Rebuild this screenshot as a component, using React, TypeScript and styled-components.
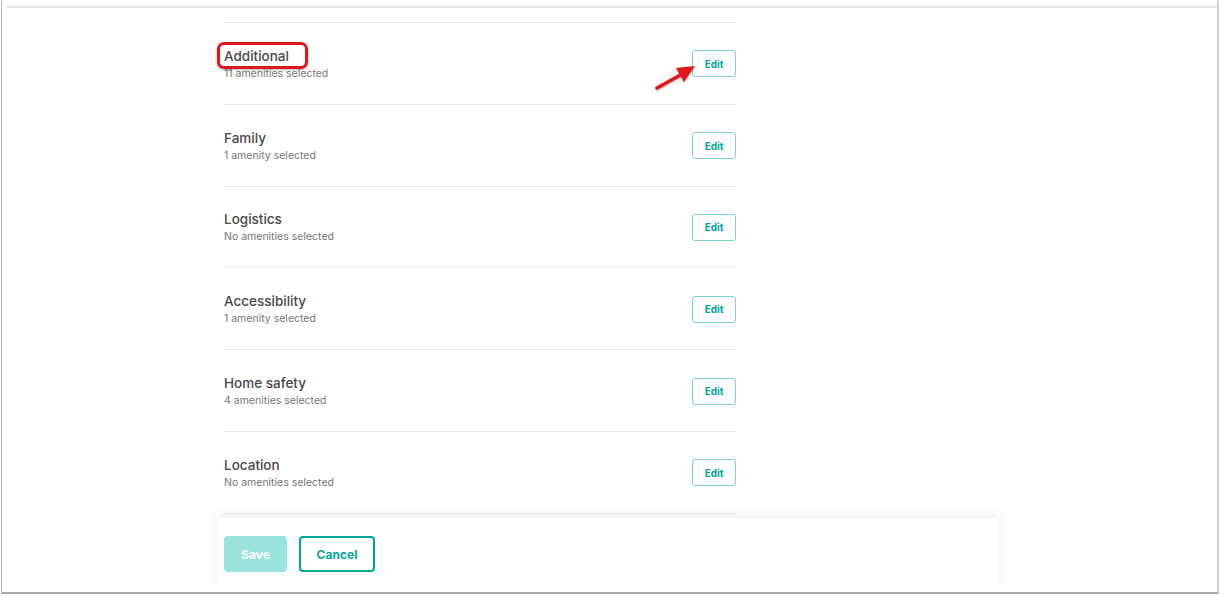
import styled, { createGlobalStyle } from "styled-components";

const GlobalStyle = createGlobalStyle`
  html, body {
    margin: 0;
    padding: 0;
    background: #ffffff;
    font-family: "Inter", "Noto Sans", sans-serif;
    overflow: hidden;
  }
`;

type Amenity = {
  title: string;
  summary: string;
};

const amenities: Amenity[] = [
  { title: "Additional", summary: "11 amenities selected" },
  { title: "Family", summary: "1 amenity selected" },
  { title: "Logistics", summary: "No amenities selected" },
  { title: "Accessibility", summary: "1 amenity selected" },
  { title: "Home safety", summary: "4 amenities selected" },
  { title: "Location", summary: "No amenities selected" },
];

const App = () => {
  return (
    <Frame>
      <GlobalStyle />
      <Window>
        <TopRule />
        <Body>
          <List>
            {amenities.map((item) => (
              <Row key={item.title}>
                <RowText>
                  <Title>{item.title}</Title>
                  <Summary>{item.summary}</Summary>
                </RowText>
                <EditButton>Edit</EditButton>
              </Row>
            ))}
          </List>
          <Footer>
            <SaveButton disabled>Save</SaveButton>
            <CancelButton>Cancel</CancelButton>
          </Footer>
        </Body>
      </Window>

      {/* annotation overlays */}
      <Highlight />
      <Arrow width="60" height="40" viewBox="0 0 60 40">
        <line x1="5" y1="30" x2="32" y2="15" stroke="#e3151b" strokeWidth="3.5" strokeLinecap="round" />
        <polygon points="43,8 24,10 32,24" fill="#e3151b" />
      </Arrow>
    </Frame>
  );
};

export default App;

const Frame = styled.div`
  position: relative;
  width: 1226px;
  height: 596px;
  background: #ffffff;
`;

const Window = styled.div`
  box-sizing: border-box;
  margin-left: 1px;
  width: 1218px;
  height: 594px;
  display: flex;
  flex-direction: column;
  border-left: 1px solid #bdbdbd;
  border-right: 2px solid #cfcfcf;
  border-bottom: 2px solid #a8a8a8;
`;

const TopRule = styled.div`
  margin: 6px 0 0 5px;
  height: 2px;
  background: #e4e4e4;
  flex-shrink: 0;
`;

const Body = styled.div`
  flex: 1;
  display: flex;
  flex-direction: column;
  padding-left: 216px;
`;

const List = styled.div`
  width: 512px;
  margin: 14px 0 0 6px;
  border-bottom: 1px solid #ebebeb;
`;

const Row = styled.div`
  box-sizing: border-box;
  height: 81.8px;
  padding-top: 1px;
  display: flex;
  align-items: center;
  justify-content: space-between;
  border-top: 1px solid #ebebeb;
`;

const RowText = styled.div`
  display: flex;
  flex-direction: column;
`;

const Title = styled.div`
  font-size: 13.5px;
  line-height: 18px;
  font-weight: 500;
  color: #484848;
`;

const Summary = styled.div`
  margin-top: 2px;
  font-size: 10.5px;
  line-height: 14px;
  color: #767676;
`;

const EditButton = styled.button`
  box-sizing: border-box;
  width: 44px;
  height: 27px;
  padding: 0;
  background: #ffffff;
  border: 1px solid #7dd3ca;
  border-radius: 3px;
  font-family: inherit;
  font-size: 10px;
  font-weight: 700;
  color: #00a699;
  cursor: pointer;
`;

const Footer = styled.div`
  box-sizing: border-box;
  margin-top: auto;
  margin-bottom: 2px;
  width: 780px;
  height: 72px;
  padding: 18px 0 0 6px;
  display: flex;
  align-items: flex-start;
  gap: 12px;
  background: #ffffff;
  box-shadow: 0 -5px 8px rgba(0, 0, 0, 0.05);
`;

const BaseButton = styled.button`
  box-sizing: border-box;
  height: 36px;
  border-radius: 4px;
  font-family: inherit;
  font-size: 12px;
  font-weight: 700;
  cursor: pointer;
`;

const SaveButton = styled(BaseButton)`
  width: 63px;
  border: none;
  background: #99e4dc;
  color: #ffffff;
`;

const CancelButton = styled(BaseButton)`
  width: 76px;
  border: 2px solid #00a699;
  background: #ffffff;
  color: #00a699;
`;

const Highlight = styled.div`
  position: absolute;
  left: 217px;
  top: 42px;
  width: 91px;
  height: 27px;
  box-sizing: border-box;
  border: 3px solid #e3151b;
  border-radius: 7px;
  box-shadow: 0 1px 3px rgba(0, 0, 0, 0.3);
`;

const Arrow = styled.svg`
  position: absolute;
  left: 652px;
  top: 58px;
  filter: drop-shadow(0 1px 1px rgba(0, 0, 0, 0.3));
`;
